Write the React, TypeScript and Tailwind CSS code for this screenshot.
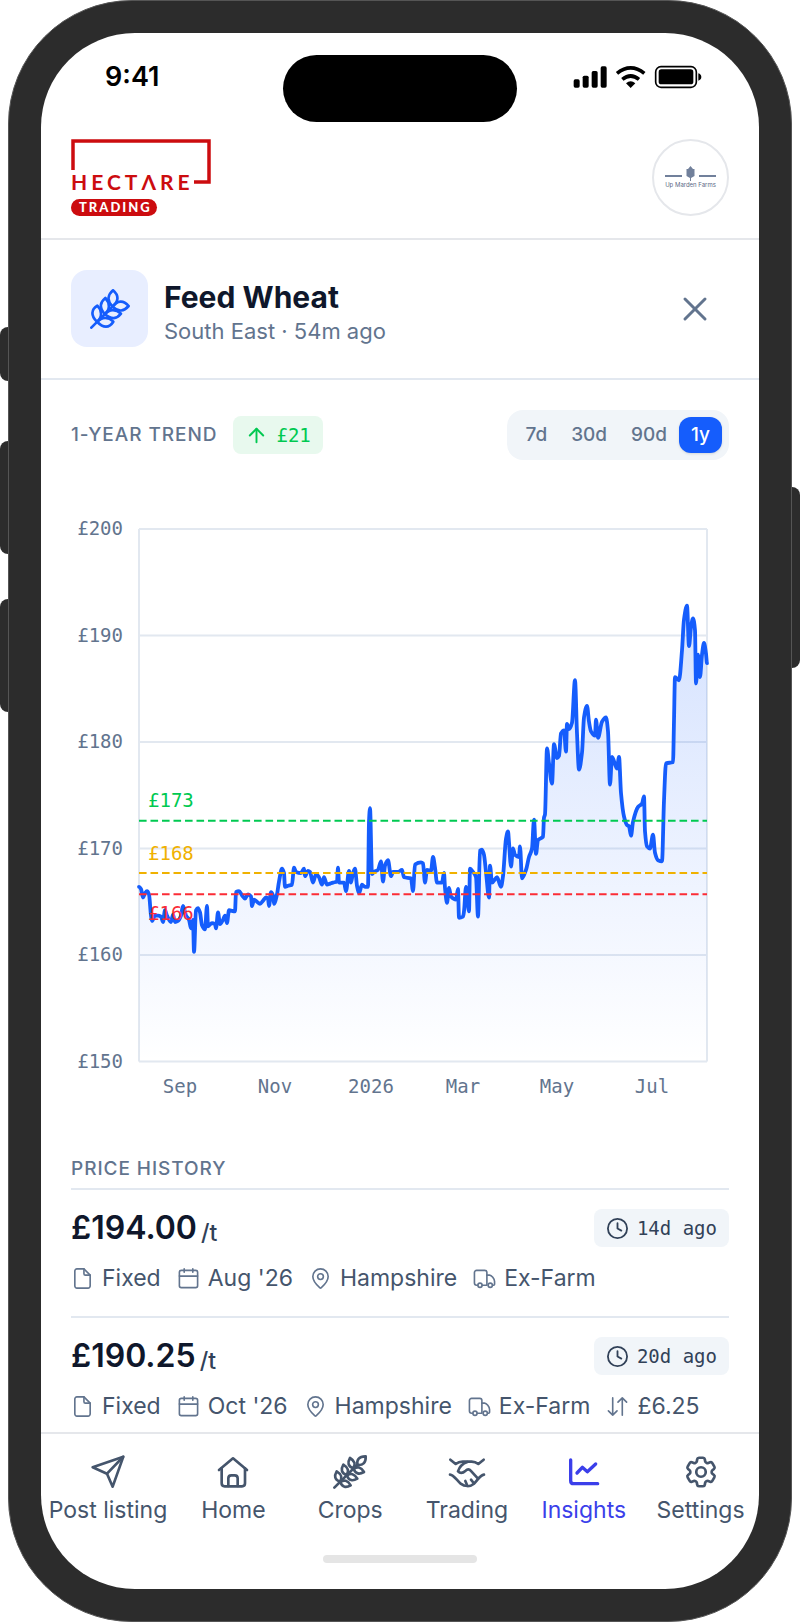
import React from "react";
import { ArrowUp, MapPin, X } from "lucide-react";
import { HiOutlineCog6Tooth } from "react-icons/hi2";
import clsx from "clsx";

type Point = [number, number];

const RANGES = ["7d", "30d", "90d", "1y"];

const Y_TICKS = [200, 190, 180, 170, 160, 150];

const X_TICKS = [
  { label: "Sep", x: 109 },
  { label: "Nov", x: 204 },
  { label: "2026", x: 300 },
  { label: "Mar", x: 392 },
  { label: "May", x: 486 },
  { label: "Jul", x: 581 },
];

const TARGETS = [
  { label: "£173", price: 172.6, labelPrice: 173.9, color: "#00c951" },
  { label: "£168", price: 167.7, labelPrice: 168.9, color: "#f0b100" },
  { label: "£166", price: 165.7, labelPrice: 163.3, color: "#fb2c36" },
];

// [x, price in £/t]
const SERIES: Point[] = [
  [68, 166.4], [70, 166.2], [72, 165.4], [74, 165.8], [76, 166], [78, 165.7],
  [80, 163.7], [81, 163.2], [84, 163.7], [87, 163.7], [90, 163.6], [92, 163.1],
  [94, 164.2], [96, 163.7], [100, 163.1], [102, 163.8], [104, 163.1],
  [107, 163.2], [110, 163.7], [112, 164.6], [115, 163.7], [118, 163.3],
  [120, 162.5], [122, 163.3], [123, 160.3], [125, 164.2], [127, 164.4],
  [129, 164], [131, 162.8], [134, 162.4], [136, 164.6], [137, 162.7],
  [141, 163], [144, 162.9], [145, 162.5], [147, 164], [149, 162.9],
  [152, 163.3], [154, 163.7], [156, 163], [158, 164.2], [164, 164.1],
  [165, 165.9], [168, 166], [171, 165.6], [174, 165.3], [177, 165.7],
  [180, 165.5], [181, 164.6], [183, 165.2], [186, 165], [189, 164.8],
  [192, 165.1], [195, 165.4], [197, 165.3], [198, 164.6], [200, 165.9],
  [202, 165.6], [203, 164.8], [206, 165.7], [208, 166.9], [211, 168.1],
  [213, 167.7], [214, 166.4], [217, 166.5], [221, 166.6], [223, 168.2],
  [225, 167.8], [230, 167.7], [233, 168.1], [234, 167.4], [237, 167.9],
  [239, 167.8], [242, 166.8], [245, 167.6], [248, 167.3], [251, 166.6],
  [253, 167.3], [256, 166.6], [259, 166.7], [262, 166.8], [266, 166.9],
  [267, 168.2], [268, 166.8], [273, 166.8], [275, 166], [278, 167.9],
  [280, 166.8], [282, 167.7], [284, 168.1], [286, 166.5], [288, 165.8],
  [291, 166.6], [294, 166.4], [297, 166.4], [298, 172.5], [299, 173.8],
  [301, 167.6], [303, 167.8], [307, 168], [310, 168.8], [312, 166.9],
  [314, 168.4], [317, 168.9], [320, 167.4], [322, 167.8], [327, 167.8],
  [331, 168], [333, 167.3], [340, 167.2], [342, 166], [344, 168.5],
  [350, 168.7], [352, 168.6], [354, 166.8], [356, 168], [360, 167.9],
  [362, 169.2], [364, 168.2], [366, 166.8], [371, 166.8], [373, 167.7],
  [374, 166.3], [376, 164.9], [378, 166.3], [380, 165.5], [385, 165.2],
  [387, 166.2], [388, 163.5], [392, 163.6], [393, 164.1], [395, 166.4],
  [398, 164.1], [399, 168.1], [402, 167.8], [405, 167.3], [407, 163.6],
  [409, 169.8], [411, 169.9], [413, 169.4], [415, 167.8], [418, 165.4],
  [419, 168.4], [421, 166.8], [426, 167.3], [430, 166.4], [432, 167.4],
  [435, 170.9], [437, 171.6], [438, 170.6], [440, 168.3], [442, 170],
  [444, 169.4], [448, 169.2], [449, 170.2], [451, 167.2], [455, 168],
  [458, 169.2], [461, 170], [463, 172.7], [465, 169.5], [467, 170.8],
  [472, 171.1], [473, 172.9], [474, 173.2], [476, 179.4], [478, 178],
  [481, 176.1], [483, 179.8], [486, 178.5], [488, 178.7], [490, 180.8],
  [493, 181.1], [495, 179.1], [496, 181.7], [498, 181.2], [501, 181.8],
  [504, 185.8], [506, 180.8], [508, 177.4], [511, 179], [513, 182.3],
  [516, 183.4], [518, 181.9], [520, 181], [524, 180.6], [525, 182.1],
  [527, 180.4], [531, 181.9], [535, 182.3], [537, 181], [539, 176],
  [541, 178.6], [546, 177.5], [548, 178.6], [550, 175.2], [553, 173],
  [556, 172.2], [558, 172.1], [560, 171.2], [562, 172.5], [567, 173.9],
  [571, 174.2], [573, 174.9], [574, 171.6], [576, 170.2], [579, 170],
  [582, 171.3], [584, 169.6], [587, 168.9], [591, 168.8], [593, 174.5],
  [595, 178], [602, 178.1], [603, 182], [604, 186.1], [608, 185.8],
  [611, 188.6], [613, 191.5], [616, 192.8], [618, 189], [620, 190.8],
  [622, 191.6], [624, 190.5], [625, 185.5], [627, 188.2], [629, 186.1],
  [631, 188.2], [633, 189.3], [635, 188.3], [636, 187.4],
];

const yFor = (price: number) => 20 + (200 - price) * 10.65;

// Monotone cubic through the points, so peaks stay where the data puts them
const monotonePath = (points: Point[]) => {
  const slope = (i: number) =>
    (points[i + 1][1] - points[i][1]) / (points[i + 1][0] - points[i][0]);
  const tangents = points.map((_, i) => {
    if (i === 0 || i === points.length - 1) return 0;
    const a = slope(i - 1);
    const b = slope(i);
    return a * b <= 0 ? 0 : (2 * a * b) / (a + b);
  });
  let d = `M${points[0][0]} ${points[0][1]}`;
  for (let i = 1; i < points.length; i++) {
    const [x0, y0] = points[i - 1];
    const [x1, y1] = points[i];
    const dx = (x1 - x0) / 3;
    d += `C${x0 + dx} ${y0 + tangents[i - 1] * dx} ${x1 - dx} ${y1 - tangents[i] * dx} ${x1} ${y1}`;
  }
  return d;
};

const linePath = monotonePath(SERIES.map(([x, p]): Point => [x, yFor(p)]));
const areaPath = `${linePath}V${yFor(150)}H68Z`;

/* ---------- icons ---------- */

const NavSvg = ({
  children,
  strokeWidth = 8,
}: {
  children: React.ReactNode;
  strokeWidth?: number;
}) => (
  <svg
    viewBox="0 0 114 114"
    className="size-[38px]"
    fill="none"
    stroke="currentColor"
    strokeWidth={strokeWidth}
    strokeLinecap="round"
    strokeLinejoin="round"
    aria-hidden="true"
  >
    {children}
  </svg>
);

const PlaneIcon = () => (
  <NavSvg>
    <path d="M11 43 103 11 71 101 54 62Z" />
    <path d="M54 62 102 12" />
  </NavSvg>
);

const HomeIcon = () => (
  <NavSvg>
    <path d="M15 51 57 16 99 51" />
    <path d="M23 46V91q0 9 9 9H84q9 0 9-9V46" />
    <path d="M43 99V76q0-9 9-9h10q9 0 9 9v23" />
  </NavSvg>
);

const CropsIcon = () => (
  <NavSvg strokeWidth={8}>
    <path d="M10 104 78 36" />
    <path d="M80 36c-4-16 3-25 24-26 1 18-7 27-24 26Z" />
    {["", "matrix(0 -1 -1 0 114 114)"].map((transform) => (
      <g key={transform} transform={transform}>
        <path d="M66 46c9-11 6-22-9-31-8 14-6 25 9 31Z" />
        <path d="M46 66c9-11 6-22-9-31-8 14-6 25 9 31Z" />
        <path d="M26 86c9-11 6-22-9-31-8 14-6 25 9 31Z" />
      </g>
    ))}
  </NavSvg>
);

const HandshakeIcon = () => (
  <NavSvg>
    <path d="M7 20 23 33Q32 26 44 26H71Q82 26 91 33L107 20" />
    <path d="M6 65c12 1 20 17 32 27 12 9 28 10 40 0 10-9 17-25 30-27" />
    <path d="M58 27C46 31 34 42 30 55c6 6 15 5 23-2 5-5 11-5 15 0l22 24" />
    <path d="M69 80 77 90M52 84 57 96" />
  </NavSvg>
);

const ChartIcon = () => (
  <NavSvg strokeWidth={10}>
    <path d="M17 21V83q0 9 9 9H98" />
    <path d="M36 60 52 43 67 56 92 33" />
  </NavSvg>
);

const SettingsIcon = () => (
  <HiOutlineCog6Tooth
    className="size-[38px] stroke-[1.7]"
    aria-hidden="true"
  />
);

const WheatIcon = () => (
  <svg
    viewBox="0 0 120 120"
    className="size-10"
    fill="none"
    stroke="currentColor"
    strokeWidth="8"
    strokeLinecap="round"
    strokeLinejoin="round"
    aria-hidden="true"
  >
    <path d="M4 116 68 52" />
    {["", "matrix(0 -1 -1 0 120 120)"].map((transform) => (
      <g key={transform} transform={transform}>
        <path d="M69 4C53 18 50 34 67 52 86 38 88 20 69 4Z" />
        <path d="M46 27C30 40 27 55 44 75 61 62 60 42 46 27Z" />
        <path d="M22 50C3 62 2 80 21 98 38 84 36 64 22 50Z" />
      </g>
    ))}
  </svg>
);

const MetaSvg = ({ children }: { children: React.ReactNode }) => (
  <svg
    viewBox="0 0 24 24"
    className="size-[23px] shrink-0 text-slate-500"
    fill="none"
    stroke="currentColor"
    strokeWidth="1.7"
    strokeLinecap="round"
    strokeLinejoin="round"
    aria-hidden="true"
  >
    {children}
  </svg>
);

const FileIcon = () => (
  <MetaSvg>
    <path d="M13.5 2H6.2A2.2 2.2 0 0 0 4 4.2V19.8A2.2 2.2 0 0 0 6.2 22H17.8A2.2 2.2 0 0 0 20 19.8V8.5Z" />
    <path d="M13.5 2V7a1.5 1.5 0 0 0 1.5 1.5h5" />
  </MetaSvg>
);

const CalendarIcon = () => (
  <MetaSvg>
    <rect x="2.5" y="3.5" width="19" height="18" rx="2" />
    <path d="M2.5 9.5h19M7.5 2v3.5M16.5 2v3.5" />
  </MetaSvg>
);

const PinIcon = () => (
  <MapPin
    className="size-[23px] shrink-0 text-slate-500"
    strokeWidth={1.7}
    aria-hidden="true"
  />
);

const TruckIcon = () => (
  <MetaSvg>
    <path d="M5 19H3.8A2.3 2.3 0 0 1 1.5 16.7V5.8A2.3 2.3 0 0 1 3.8 3.5h8.4a2.3 2.3 0 0 1 2.3 2.3V19H9.5" />
    <path d="M14.5 8.5h2.8c2 0 5.2 4 5.2 6.5v3c0 .6-.4 1-1 1h-1" />
    <circle cx="7.3" cy="19" r="2.2" />
    <circle cx="18" cy="19" r="2.2" />
  </MetaSvg>
);

const SwapIcon = () => (
  <MetaSvg>
    <path d="M7 3v18M2.5 16.5 7 21l4.5-4.5" />
    <path d="M17 21V3M12.5 7.5 17 3l4.5 4.5" />
  </MetaSvg>
);

const ClockIcon = () => (
  <svg
    viewBox="0 0 24 24"
    className="size-[23px] shrink-0"
    fill="none"
    stroke="currentColor"
    strokeWidth="1.9"
    strokeLinecap="round"
    strokeLinejoin="round"
    aria-hidden="true"
  >
    <circle cx="12" cy="12" r="10" />
    <path d="M12 6.5V12l4 2.2" />
  </svg>
);

const META_ICONS = {
  type: FileIcon,
  month: CalendarIcon,
  place: PinIcon,
  delivery: TruckIcon,
  change: SwapIcon,
};

const HISTORY: {
  price: string;
  age: string;
  meta: { kind: keyof typeof META_ICONS; text: string }[];
}[] = [
  {
    price: "£194.00",
    age: "14d ago",
    meta: [
      { kind: "type", text: "Fixed" },
      { kind: "month", text: "Aug '26" },
      { kind: "place", text: "Hampshire" },
      { kind: "delivery", text: "Ex-Farm" },
    ],
  },
  {
    price: "£190.25",
    age: "20d ago",
    meta: [
      { kind: "type", text: "Fixed" },
      { kind: "month", text: "Oct '26" },
      { kind: "place", text: "Hampshire" },
      { kind: "delivery", text: "Ex-Farm" },
      { kind: "change", text: "£6.25" },
    ],
  },
];

const NAV = [
  { label: "Post listing", Icon: PlaneIcon, wide: true },
  { label: "Home", Icon: HomeIcon },
  { label: "Crops", Icon: CropsIcon },
  { label: "Trading", Icon: HandshakeIcon },
  { label: "Insights", Icon: ChartIcon, active: true },
  { label: "Settings", Icon: SettingsIcon },
];

/* ---------- sections ---------- */

const StatusBar = () => (
  <div className="flex items-start px-14 pt-[22px]">
    <div className="flex h-[45px] flex-1 items-center">
      <span className="pl-2 text-[27px] font-semibold text-black">9:41</span>
    </div>
    <div className="h-[67px] w-[234px] rounded-full bg-black" />
    <div className="flex h-[43px] flex-1 items-center justify-end">
      <svg viewBox="0 0 390 72" className="h-6 w-[130px]" aria-hidden="true">
        <rect x="2" y="43" width="18" height="25" rx="5" />
        <rect x="29" y="32" width="18" height="36" rx="5" />
        <rect x="56" y="18" width="18" height="50" rx="5" />
        <rect x="83" y="4" width="18" height="64" rx="5" />
        <g fill="none" stroke="#000" strokeWidth="11">
          <path d="M132 25Q173-8 214 25" />
          <path d="M148 43Q173 23 198 43" />
        </g>
        <path d="M159 55Q173 43 187 55L173 69Z" />
        <rect
          x="248"
          y="5"
          width="122"
          height="62"
          rx="16"
          fill="none"
          stroke="#000"
          strokeWidth="5"
        />
        <rect x="257" y="13" width="104" height="45" rx="8" />
        <path d="M376 25q9 3 9 11t-9 11Z" />
      </svg>
    </div>
  </div>
);

const HectareLogo = () => (
  <svg
    viewBox="0 0 140 77"
    className="h-[77px] w-[140px]"
    role="img"
    aria-label="Hectare Trading"
  >
    <path
      d="M2 31V2H138V43H123"
      fill="none"
      stroke="#cc0c0f"
      strokeWidth="3.5"
    />
    <text
      x="0"
      y="51"
      className="fill-[#cc0c0f] font-['Lato'] text-[21px] font-bold tracking-[4px]"
    >
      HECTΛRE
    </text>
    <rect x="0" y="60" width="86" height="17" rx="8.5" fill="#cc0c0f" />
    <text
      x="8"
      y="73"
      className="fill-white font-['Lato'] text-[13px] font-black tracking-[2px]"
    >
      TRADING
    </text>
  </svg>
);

const FarmAvatar = () => (
  <button
    type="button"
    aria-label="Account"
    className="flex size-[77px] flex-col items-center justify-center rounded-full border-2 border-gray-200"
  >
    <svg viewBox="0 0 51 15" className="h-[15px] w-[51px]" aria-hidden="true">
      <path d="M0 10H17M34 10H51" stroke="#71809b" strokeWidth="2" />
      <path
        d="M25.5 0 28 3 29.5 3V10L26 12V15H25V12L21.5 10V3L23 3Z"
        fill="#71809b"
      />
    </svg>
    <span className="text-[6px] leading-[8px] text-[#5c6a86]">
      Up Marden Farms
    </span>
  </button>
);

const PriceChart = () => (
  <svg
    viewBox="0 0 658 600"
    className="mt-[49px] w-full font-['DejaVu_Sans_Mono',monospace] text-[19px]"
    role="img"
    aria-label="Feed wheat price over one year"
  >
    <defs>
      <linearGradient id="price-fill" x1="0" y1="0" x2="0" y2="1">
        <stop offset="0" stopColor="#155dfc" stopOpacity="0.18" />
        <stop offset="1" stopColor="#155dfc" stopOpacity="0" />
      </linearGradient>
    </defs>

    {Y_TICKS.map((tick) => (
      <g key={tick}>
        <path
          d={`M68 ${yFor(tick)}H636`}
          stroke="#e2e8f0"
          strokeWidth="2"
        />
        <text
          x="52"
          y={yFor(tick) + 6}
          textAnchor="end"
          className="fill-slate-500"
        >
          £{tick}
        </text>
      </g>
    ))}
    <path
      d={`M68 ${yFor(200)}V${yFor(150)}M636 ${yFor(200)}V${yFor(150)}`}
      stroke="#e2e8f0"
      strokeWidth="2"
    />
    {X_TICKS.map(({ label, x }) => (
      <text
        key={label}
        x={x}
        y="584"
        textAnchor="middle"
        className="fill-slate-500"
      >
        {label}
      </text>
    ))}

    <path d={areaPath} fill="url(#price-fill)" />
    <path
      d={linePath}
      fill="none"
      stroke="#155dfc"
      strokeWidth="3.8"
      strokeLinecap="round"
      strokeLinejoin="round"
    />

    {TARGETS.map(({ label, price, labelPrice, color }) => (
      <g key={label}>
        <path
          d={`M68 ${yFor(price)}H636`}
          stroke={color}
          strokeWidth="2"
          strokeDasharray="7.6 3.9"
        />
        <text x="77" y={yFor(labelPrice)} fill={color}>
          {label}
        </text>
      </g>
    ))}
  </svg>
);

const App = () => {
  const [range, setRange] = React.useState("1y");

  return (
    <div className="flex bg-white font-['Inter',sans-serif]">
      {/* side keys, left */}
      <div className="w-2 shrink-0 pt-[327px]">
        <div className="h-[54px] rounded-l-lg bg-[#2c2c2c]" />
        <div className="mt-[60px] h-[113px] rounded-l-lg bg-[#2c2c2c]" />
        <div className="mt-[45px] h-[113px] rounded-l-lg bg-[#2c2c2c]" />
      </div>

      <div className="min-w-0 flex-1 rounded-[124px] border border-[#555] bg-[#2c2c2c] p-8">
        <div className="overflow-hidden rounded-[94px] bg-white">
          <StatusBar />

          <header className="flex items-center justify-between border-b-2 border-gray-200 px-[30px] pt-[17px] pb-[22px]">
            <a href="#home" className="block">
              <HectareLogo />
            </a>
            <FarmAvatar />
          </header>

          <div className="flex items-center gap-4 border-b-2 border-slate-200 px-[30px] pt-[30px] pb-[31px]">
            <div className="flex size-[77px] items-center justify-center rounded-2xl bg-[#e8eeff] text-blue-600">
              <WheatIcon />
            </div>
            <div className="min-w-0 flex-1 pt-2">
              <h1 className="text-[30px] leading-[36px] font-bold text-slate-900">
                Feed Wheat
              </h1>
              <p className="text-[22px] leading-[32px] text-slate-500">
                South East · 54m ago
              </p>
            </div>
            <button
              type="button"
              aria-label="Close"
              className="mr-[14px] text-slate-500"
            >
              <X size={40} strokeWidth={1.8} />
            </button>
          </div>

          <main className="px-[30px] pt-[30px]">
            <div className="flex items-center justify-between">
              <div className="flex items-center gap-4">
                <h2 className="text-[19px] font-medium tracking-wider text-slate-500">
                  1-YEAR TREND
                </h2>
                <div className="flex h-[38px] items-center gap-2 rounded-lg bg-[#e8f9ee] px-3 text-green-500">
                  <ArrowUp size={23} strokeWidth={2} />
                  <span className="font-['DejaVu_Sans_Mono',monospace] text-[19px]">
                    £21
                  </span>
                </div>
              </div>
              <div className="flex rounded-2xl bg-slate-100 p-[7px]">
                {RANGES.map((item) => (
                  <button
                    key={item}
                    type="button"
                    aria-pressed={item === range}
                    onClick={() => setRange(item)}
                    className={clsx(
                      "h-9 rounded-xl px-3 text-[19px] font-medium",
                      item === range
                        ? "bg-blue-600 text-white shadow-sm"
                        : "text-slate-500",
                    )}
                  >
                    {item}
                  </button>
                ))}
              </div>
            </div>

            <PriceChart />

            <h2 className="mt-[46px] pb-[5px] text-[19px] leading-[28px] font-medium tracking-wider text-slate-500">
              PRICE HISTORY
            </h2>
            <ul>
              {HISTORY.map(({ price, age, meta }) => (
                <li
                  key={price}
                  className="border-t-2 border-slate-200 pt-[19px] pb-[22px] last:pb-[10px]"
                >
                  <div className="flex items-center justify-between">
                    <p className="flex items-end gap-1 text-slate-900">
                      <span className="text-[32px] leading-[38px] font-semibold">
                        {price}
                      </span>
                      <span className="text-[23px] leading-[28px] font-medium text-slate-700">
                        /t
                      </span>
                    </p>
                    <div className="flex h-[38px] items-center gap-2 rounded-lg bg-slate-100 px-3 text-slate-700">
                      <ClockIcon />
                      <span className="font-['DejaVu_Sans_Mono',monospace] text-[19px]">
                        {age}
                      </span>
                    </div>
                  </div>
                  <div className="mt-[15px] flex gap-4 whitespace-nowrap text-slate-600">
                    {meta.map(({ kind, text }) => {
                      const Icon = META_ICONS[kind];
                      return (
                        <span
                          key={kind}
                          className="flex items-center gap-2 text-[23px] leading-[32px]"
                        >
                          <Icon />
                          {text}
                        </span>
                      );
                    })}
                  </div>
                </li>
              ))}
            </ul>
          </main>

          <nav className="flex border-t-2 border-gray-200 pt-[19px]">
            {NAV.map(({ label, Icon, wide, active }) => (
              <a
                key={label}
                href="#nav"
                aria-current={active ? "page" : undefined}
                className={clsx(
                  "flex flex-col items-center gap-1 text-[23px] leading-[30px] whitespace-nowrap",
                  wide ? "w-[134px] shrink-0" : "min-w-0 flex-1",
                  active ? "text-[#3b3fea]" : "text-slate-600",
                )}
              >
                <Icon />
                {label}
              </a>
            ))}
          </nav>
          <div className="mx-auto mt-[30px] mb-[26px] h-2 w-[154px] rounded-full bg-[#e5e5e5]" />
        </div>
      </div>

      {/* side key, right */}
      <div className="w-2 shrink-0 pt-[487px]">
        <div className="h-[181px] rounded-r-lg bg-[#2c2c2c]" />
      </div>
    </div>
  );
};

export default App;
